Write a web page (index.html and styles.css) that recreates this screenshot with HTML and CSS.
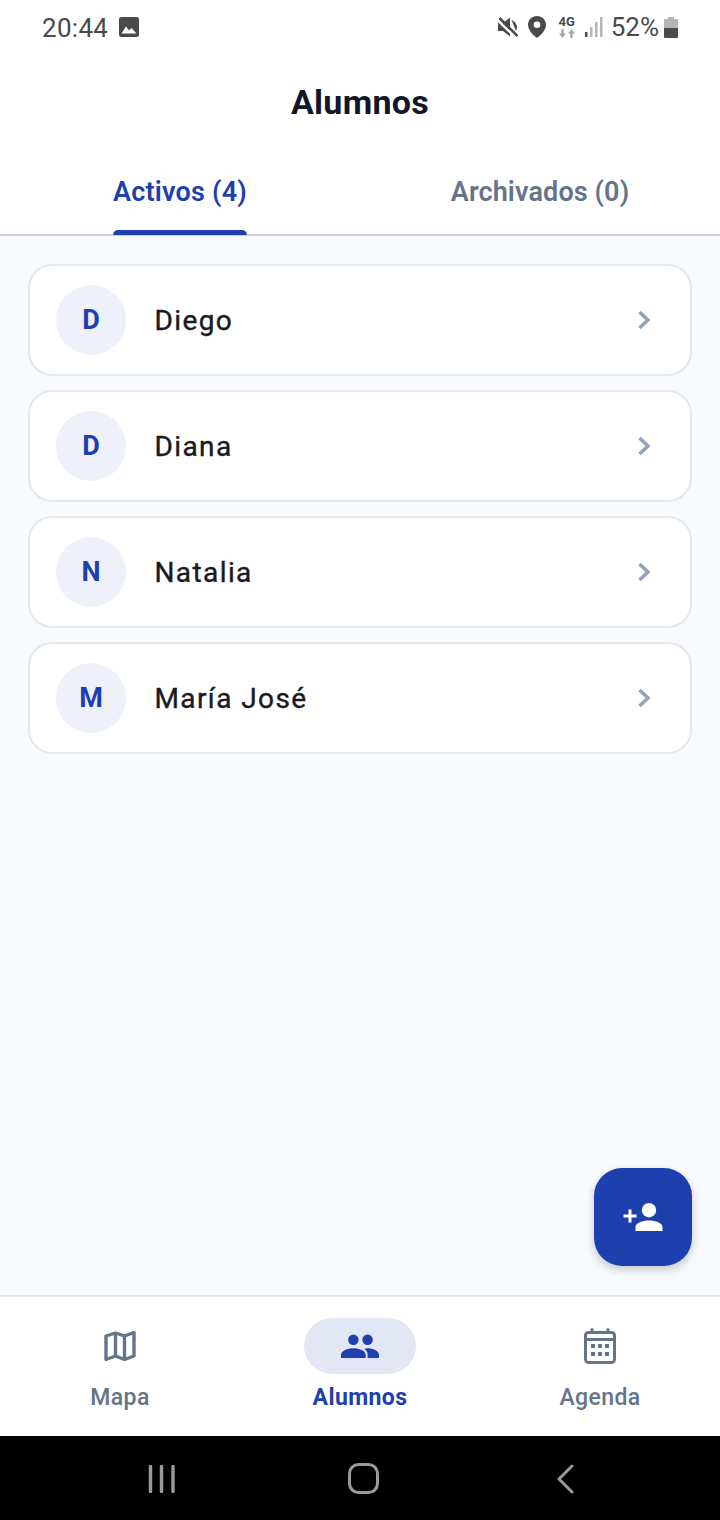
FILE: index.html
```html
<!DOCTYPE html>
<html lang="es">
<head>
<meta charset="utf-8">
<title>Alumnos</title>
<link rel="stylesheet" href="styles.css">
</head>
<body>
<div class="app">
  <div class="status">
    <div class="status-left">
      <span class="time">20:44</span>
      <svg class="st-img" viewBox="0 0 20 20"><path fill="#4a4a4a" d="M2.5 0h15A2.5 2.5 0 0 1 20 2.500v15a2.500 2.500 0 0 1-2.500 2.500h-15A2.500 2.500 0 0 1 0 17.500v-15A2.500 2.500 0 0 1 2.500 0z"/><path fill="#fff" d="M2.500 16.500 7 9.500l3 4 2.500-2.500 5 5.500z"/></svg>
    </div>
    <div class="status-right">
      <svg class="st-mute" viewBox="0 0 20 20"><path fill="#4a4a4a" d="M0 6h5L12 .5v19L5 14H0z"/><path fill="#4a4a4a" d="M13.500 3c3 1.200 5.500 4 5.500 7.300 0 1.400-.4 2.700-1 3.700z"/><path stroke="#fff" stroke-width="2.400" d="M0 3.500l17 16.500"/><path stroke="#4a4a4a" stroke-width="2.600" d="M1.500 1l18 18"/></svg>
      <svg class="st-pin" viewBox="0 0 18 22"><path fill-rule="evenodd" fill="#4a4a4a" d="M9 0c5 0 9 3.800 9 8.700C18 14 13 19 9 22 5 19 0 14 0 8.700 0 3.800 4 0 9 0zm0 5.500a3.300 3.300 0 1 0 0 6.600 3.300 3.300 0 0 0 0-6.600z"/></svg>
      <div class="st-net">
        <span class="net-label">4G</span>
        <svg viewBox="0 0 16 9" class="net-arrows"><path fill="#a8a8a8" d="M3.500 9 0 4.500h2.300V0h2.400v4.500H7zM12.500 0 16 4.500h-2.300V9h-2.400V4.500H9z"/></svg>
      </div>
      <svg class="st-signal" viewBox="0 0 18 20"><rect x="0" y="15" width="2.500" height="5" fill="#4a4a4a"/><rect x="5" y="10" width="2.500" height="10" fill="#b5b5b5"/><rect x="10" y="5" width="2.500" height="15" fill="#b5b5b5"/><rect x="15" y="0" width="2.500" height="20" fill="#b5b5b5"/></svg>
      <span class="pct">52%</span>
      <svg class="st-batt" viewBox="0 0 14 21"><path fill="#b5b5b5" d="M4 0h6v2h3a1 1 0 0 1 1 1v8H0V3a1 1 0 0 1 1-1h3z"/><path fill="#4a4a4a" d="M0 11h14v9a1 1 0 0 1-1 1H1a1 1 0 0 1-1-1z"/></svg>
    </div>
  </div>

  <header class="title-bar"><h1 class="title">Alumnos</h1></header>

  <nav class="tabs">
    <div class="tab tab-active"><span class="tab-label">Activos (4)<i class="tab-ind"></i></span></div>
    <div class="tab"><span class="tab-label">Archivados (0)</span></div>
  </nav>

  <main class="list">
    <div class="card"><div class="avatar">D</div><div class="name">Diego</div><svg class="chev" viewBox="0 0 14 20"><path d="M3.500 2 12 10l-8.500 8"/></svg></div>
    <div class="card"><div class="avatar">D</div><div class="name">Diana</div><svg class="chev" viewBox="0 0 14 20"><path d="M3.500 2 12 10l-8.500 8"/></svg></div>
    <div class="card"><div class="avatar">N</div><div class="name">Natalia</div><svg class="chev" viewBox="0 0 14 20"><path d="M3.500 2 12 10l-8.500 8"/></svg></div>
    <div class="card"><div class="avatar">M</div><div class="name">María José</div><svg class="chev" viewBox="0 0 14 20"><path d="M3.500 2 12 10l-8.500 8"/></svg></div>
    <button class="fab" aria-label="Añadir alumno">
      <svg viewBox="0 0 40 28" class="fab-icon"><path fill="#fff" d="M26 0a7.200 7.200 0 1 1 0 14.400A7.200 7.200 0 0 1 26 0zM26 17.500c6.500 0 13.500 2.600 13.500 6.500v4h-27v-4c0-3.900 7-6.500 13.500-6.500z"/><path fill="#fff" d="M5.500 6.500h3v5h5v3h-5v5h-3v-5h-5v-3h5z"/></svg>
    </button>
  </main>

  <nav class="bottom">
    <div class="nav-item">
      <div class="nav-pill">
        <svg class="nav-icon" viewBox="0 0 32 32"><path fill="none" stroke="#64748b" stroke-width="3.400" stroke-linejoin="round" d="M2 6 11.500 3 20.500 6 30 2.500V26l-9.500 3.500-9-3.500L2 29.500zM11.500 3V26M20.500 6V29.500"/></svg>
      </div>
      <span class="nav-label">Mapa</span>
    </div>
    <div class="nav-item nav-active">
      <div class="nav-pill">
        <svg class="nav-icon-people" viewBox="0 0 40 26"><circle cx="13" cy="6" r="5.500" fill="#1e40af"/><circle cx="28" cy="6" r="5.500" fill="#1e40af"/><path fill="#1e40af" d="M0 26v-4c0-4.500 7-7 13-7s13 2.500 13 7v4z"/><path fill="#1e40af" d="M28 26v-4c0-3-1.500-4.800-3.500-6.200 1.300-.4 2.500-.8 3.500-.8 5.500 0 12 2.500 12 7v4z"/></svg>
      </div>
      <span class="nav-label">Alumnos</span>
    </div>
    <div class="nav-item">
      <div class="nav-pill">
        <svg class="nav-icon" viewBox="0 0 32 36"><path fill="none" stroke="#64748b" stroke-width="3" d="M4.500 4.500h23a3 3 0 0 1 3 3v24a3 3 0 0 1-3 3h-23a3 3 0 0 1-3-3v-24a3 3 0 0 1 3-3zM1.500 11.500h29"/><path stroke="#64748b" stroke-width="3" stroke-linecap="round" d="M8 1.500v3M24 1.500v3"/><g fill="#64748b"><rect x="7" y="16" width="4" height="4"/><rect x="14" y="16" width="4" height="4"/><rect x="21" y="16" width="4" height="4"/><rect x="7" y="24" width="4" height="4"/><rect x="14" y="24" width="4" height="4"/><rect x="21" y="24" width="4" height="4"/></g></svg>
      </div>
      <span class="nav-label">Agenda</span>
    </div>
  </nav>

  <footer class="sysnav">
    <svg class="sys-recent" viewBox="0 0 28 28"><path stroke="#9a9a9a" stroke-width="3.400" stroke-linecap="round" d="M2.500 1.500v25M13.500 1.500v25M25 1.500v25"/></svg>
    <svg class="sys-home" viewBox="0 0 31 31"><rect x="1.500" y="1.500" width="28" height="28" rx="9" fill="none" stroke="#9a9a9a" stroke-width="3"/></svg>
    <svg class="sys-back" viewBox="0 0 18 30"><path d="M16 2 3 15l13 13" fill="none" stroke="#9a9a9a" stroke-width="3" stroke-linecap="round" stroke-linejoin="round"/></svg>
  </footer>
</div>
</body>
</html>
```
FILE: styles.css
```css
* { box-sizing: border-box; }
html, body { margin: 0; padding: 0; }
body { font-family: Roboto, "Noto Sans", sans-serif; background: #fff; }
.app { width: 720px; height: 1520px; display: flex; flex-direction: column; overflow: hidden; }

.status { height: 56px; display: flex; justify-content: space-between; align-items: center; padding: 0 42px; color: #4a4a4a; flex: none; }
.status-left, .status-right { display: flex; align-items: center; }
.status-right { padding-bottom: 2px; }
.time { font-size: 26px; letter-spacing: .3px; }
.st-img { width: 20px; height: 20px; margin: 0 0 2px 11px; }
.st-mute { width: 20px; height: 20px; margin-right: 10px; }
.st-pin { width: 18px; height: 22px; margin-right: 13px; }
.st-net { width: 16px; display: flex; flex-direction: column; align-items: center; margin-right: 10px; }
.net-label { font-size: 13px; font-weight: 700; line-height: 12px; color: #4a4a4a; }
.net-arrows { width: 16px; height: 9px; margin-top: 1px; }
.st-signal { width: 18px; height: 20px; margin-right: 8px; }
.pct { font-size: 26px; line-height: 30px; }
.st-batt { width: 14px; height: 21px; margin-left: 5px; }

.title-bar { height: 78px; display: flex; align-items: flex-start; justify-content: center; flex: none; padding-top: 24px; }
.title { margin: 0; font-size: 34px; line-height: 44px; font-weight: 700; letter-spacing: .3px; color: #0f172a; }

.tabs { height: 102px; display: flex; border-bottom: 2px solid #cbd0dc; flex: none; }
.tab { flex: 1; display: flex; justify-content: center; }
.tab-label { position: relative; display: block; height: 100px; padding-top: 41px; font-size: 27px; line-height: 34px; font-weight: 600; letter-spacing: .12px; color: #64748b; }
.tab-active .tab-label { color: #1e40af; letter-spacing: .2px; }
.tab-ind { position: absolute; left: 0; right: 0; bottom: 0; height: 5px; margin-bottom: -1px; background: #1e40af; border-radius: 5px 5px 0 0; }

.list { position: relative; flex: 1; background: #f8fafc; padding: 28px 28px 0; display: flex; flex-direction: column; gap: 14px; }
.card { height: 112px; background: #fff; border: 2px solid #e2e8f0; border-radius: 24px; display: flex; align-items: center; padding: 0 40px 0 26px; flex: none; }
.avatar { width: 70px; height: 70px; border-radius: 50%; background: #eef1fa; color: #1e40af; font-size: 27px; font-weight: 700; display: flex; align-items: center; justify-content: center; flex: none; }
.name { flex: 1; margin-left: 28.500px; font-size: 28px; font-weight: 400; letter-spacing: 1.400px; color: #1a1a20; -webkit-text-stroke: .4px #1a1a20; }
.chev { width: 14px; height: 20px; fill: none; stroke: #94a3b8; stroke-width: 3.600; flex: none; }

.fab { position: absolute; right: 28px; bottom: 29px; width: 98px; height: 98px; border: 0; border-radius: 28px; background: #1e40af; box-shadow: 0 4px 8px rgba(15, 23, 42, .22); display: flex; align-items: center; justify-content: center; padding: 0; }
.fab-icon { width: 40px; height: 28px; }

.bottom { height: 141px; flex: none; background: #fff; border-top: 2px solid #e2e8f0; display: flex; }
.nav-item { flex: 1; display: flex; flex-direction: column; align-items: center; padding-top: 21px; }
.nav-pill { width: 112px; height: 56px; border-radius: 28px; display: flex; align-items: center; justify-content: center; }
.nav-active .nav-pill { background: #e3e7f5; }
.nav-icon { width: 32px; height: 36px; }
.nav-icon-people { width: 38px; height: 24.700px; }
.nav-label { margin-top: 10px; font-size: 23px; line-height: 28px; font-weight: 500; letter-spacing: .4px; color: #64748b; }
.nav-active .nav-label { color: #1e40af; font-weight: 700; }

.sysnav { height: 84px; flex: none; background: #000; position: relative; display: flex; align-items: center; justify-content: center; }
.sys-recent { position: absolute; left: 148px; top: 29px; width: 28px; height: 28px; }
.sys-home { width: 31px; height: 31px; margin-left: 6px; }
.sys-back { position: absolute; left: 556px; top: 28px; width: 18px; height: 30px; }
```
